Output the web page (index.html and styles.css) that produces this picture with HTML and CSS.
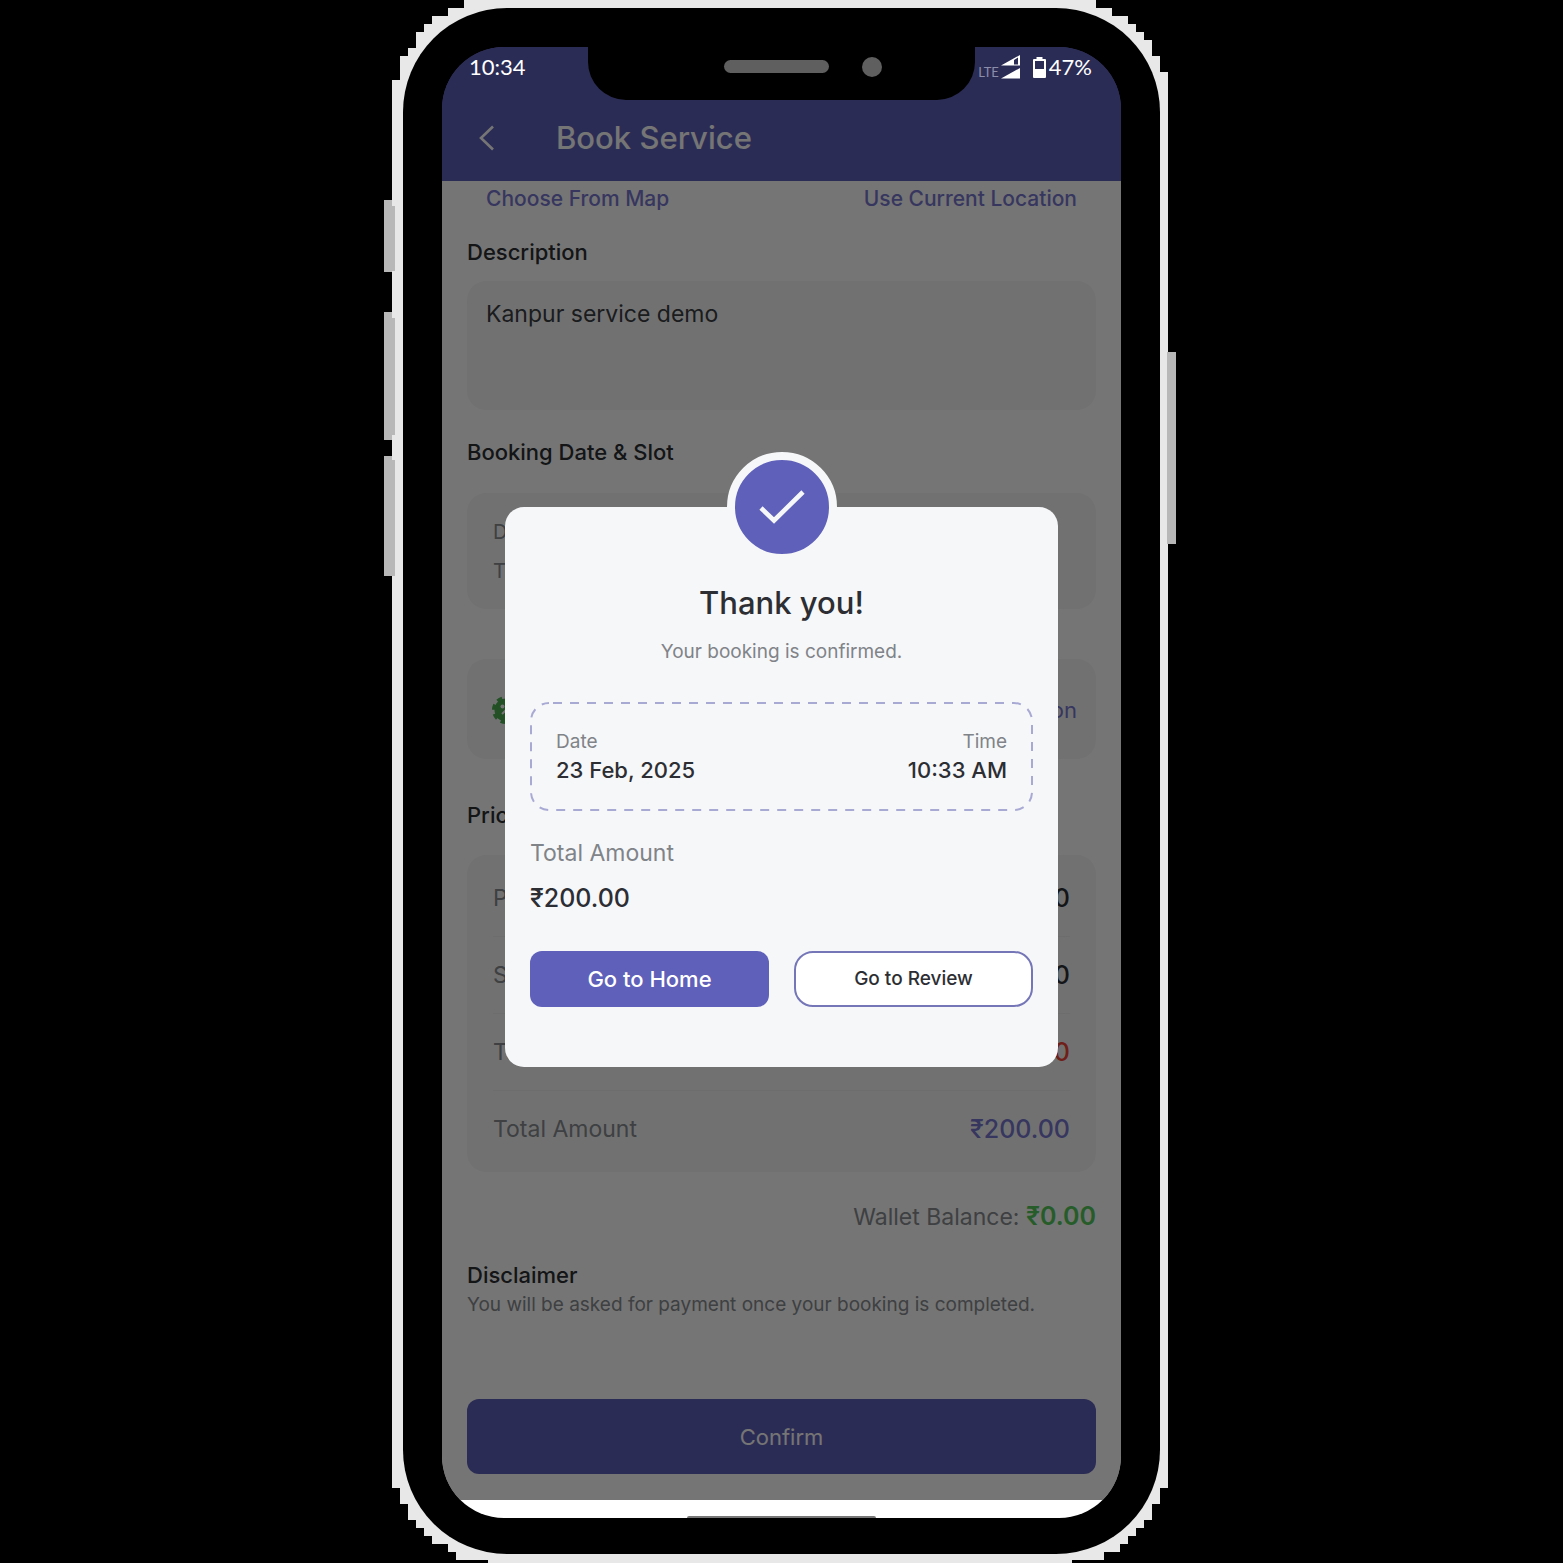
FILE: index.html
```html
<!DOCTYPE html>
<html lang="en">
<head>
<meta charset="utf-8">
<meta name="viewport" content="width=device-width, initial-scale=1">
<title>Book Service</title>
<link rel="stylesheet" href="styles.css">
</head>
<body>
<div class="phone">
  <svg class="phone-edge" viewBox="384 0 792 1563" preserveAspectRatio="none" shape-rendering="crispEdges" aria-hidden="true">
    <path fill="#e8e8e8" d="M464 0H1096V8H1112V16H1128V24H1136V32H1144V40H1152V56H1160V72H1168V1488H1160V1504H1152V1520H1144V1528H1136V1536H1128V1544H1120V1552H1104V1560H1072V1563H488V1560H456V1552H448V1544H432V1536H424V1528H416V1520H408V1504H400V1488H392V80H400V56H408V48H416V32H424V24H432V16H448V8H464Z"/>
    <path fill="#b8b8b8" d="M384 200H392V206H395V271H392V272H384ZM384 312H392V318H395V435H392V440H384ZM384 456H392V460H395V576H384ZM1167 352H1176V544H1167Z"/>
  </svg>
  <div class="bezel">
    <div class="screen">
      <div class="app">
        <header class="app-header">
          <div class="status-bar">
            <span>10:34</span>
            <div class="status-icons">
              <span class="lte">LTE</span>
              <svg class="signal" viewBox="0 0 19 24" aria-hidden="true"><path fill="#fff" fill-rule="evenodd" d="M0 10.500L19 0V10.500ZM13 5V9.500H17V2.500Z"/><path fill="#fff" d="M0 23.500L19 13V23.500Z"/></svg>
              <svg class="battery" viewBox="0 0 13 21" aria-hidden="true"><path fill="#fff" fill-rule="evenodd" d="M3.500 0H9.500V2H12Q13 2 13 3V20Q13 21 12 21H1Q0 21 0 20V3Q0 2 1 2H3.500ZM2 4V12H11V4Z"/></svg>
              <span>47%</span>
            </div>
          </div>
          <div class="app-bar">
            <button class="back" type="button" aria-label="Back"><svg viewBox="0 0 16 26" aria-hidden="true"><path d="M15 1.500L3 13L15 24.500" fill="none" stroke="#fff" stroke-width="2.600"/></svg></button>
            <h1>Book Service</h1>
          </div>
        </header>
        <main class="content">
          <div class="location-links">
            <a href="#map">Choose From Map</a>
            <a href="#location">Use Current Location</a>
          </div>
          <label class="section-title description-title" for="description">Description</label>
          <textarea class="description" id="description">Kanpur service demo</textarea>
          <h2 class="section-title slot-title">Booking Date &amp; Slot</h2>
          <section class="card slot-card">
            <p>Date: 23 Feb, 2025</p>
            <p>Time: 10:33 AM</p>
          </section>
          <section class="card coupon-card">
            <svg class="coupon-icon" viewBox="0 0 28 28" aria-hidden="true"><circle cx="14" cy="14" r="11.500" fill="#4caf50"/><circle cx="14" cy="14" r="11.500" fill="none" stroke="#4caf50" stroke-width="5" stroke-dasharray="5 4.030"/><path d="M10 18L18 10" stroke="#fff" stroke-width="2"/><circle cx="10.500" cy="10.500" r="2" fill="#fff"/><circle cx="17.500" cy="17.500" r="2" fill="#fff"/></svg>
            <a href="#coupon">Apply Coupon</a>
          </section>
          <h2 class="section-title price-title">Price Detail</h2>
          <dl class="card price-card">
            <div class="price-row"><dt>Price</dt><dd>₹200.00</dd></div>
            <div class="price-row"><dt>Subtotal</dt><dd>₹200.00</dd></div>
            <div class="price-row"><dt>Tax</dt><dd class="tax">₹0.00</dd></div>
            <div class="price-row"><dt>Total Amount</dt><dd class="total">₹200.00</dd></div>
          </dl>
          <p class="wallet">Wallet Balance: <strong>₹0.00</strong></p>
          <h2 class="section-title disclaimer-title">Disclaimer</h2>
          <p class="disclaimer">You will be asked for payment once your booking is completed.</p>
          <button class="confirm" type="button">Confirm</button>
        </main>
        <div class="scrim">
          <div class="dialog" role="dialog" aria-modal="true" aria-labelledby="thanks">
            <div class="badge"><svg viewBox="0 0 46 36" aria-hidden="true"><path d="M2 19L15 31.500L44 3" fill="none" stroke="#f6f7f9" stroke-width="4.600"/></svg></div>
            <h2 class="dialog-title" id="thanks">Thank you!</h2>
            <p class="dialog-note">Your booking is confirmed.</p>
            <div class="when">
              <svg class="when-outline" aria-hidden="true"><rect rx="18"/></svg>
              <div><p class="when-label">Date</p><p class="when-value">23 Feb, 2025</p></div>
              <div class="when-end"><p class="when-label">Time</p><p class="when-value">10:33 AM</p></div>
            </div>
            <p class="amount-label">Total Amount</p>
            <p class="amount">₹200.00</p>
            <div class="actions">
              <button class="home" type="button">Go to Home</button>
              <button class="review" type="button">Go to Review</button>
            </div>
          </div>
        </div>
      </div>
      <div class="gesture-bar"><div class="gesture-pill"></div></div>
      <div class="notch"><span class="speaker"></span><span class="camera"></span></div>
    </div>
  </div>
</div>
</body>
</html>
```
FILE: styles.css
```css
* {
  box-sizing: border-box;
}

body {
  margin: 0;
  padding: 8px 20px 9px;
  background: #000;
  color: #2c2e33;
  font-family: Inter, "Liberation Sans", sans-serif;
  font-size: 22px;
  line-height: 28px;
}

h1, h2, p, dl, dd {
  margin: 0;
}

a {
  color: #7877d0;
  text-decoration: none;
}

button {
  border: 0;
  padding: 0;
  background: none;
  font: inherit;
}

.phone {
  position: relative;
  max-width: 757px;
  margin: 0 auto;
}

.phone-edge {
  position: absolute;
  top: -8px;
  left: -19px;
  width: calc(100% + 35px);
  height: calc(100% + 17px);
}

.bezel {
  position: relative;
  padding: 39px 39px 36px;
  border-radius: 104px;
  background: #000;
}

.screen {
  position: relative;
  overflow: hidden;
  border-radius: 62px;
  background: #000;
}

.app {
  position: relative;
}

.notch {
  position: absolute;
  z-index: 3;
  top: 0;
  left: 146px;
  right: 146px;
  display: flex;
  align-items: center;
  justify-content: flex-end;
  gap: 33px;
  height: 53px;
  padding: 0 93px 14px 0;
  border-radius: 0 0 38px 38px;
  background: #000;
}

.speaker {
  width: 105px;
  height: 13px;
  border-radius: 7px;
  background: #5f5f5f;
}

.camera {
  width: 20px;
  height: 20px;
  border-radius: 50%;
  background: #5f5f5f;
}

.app-header {
  background: #5f60b9;
  color: #fff;
}

.status-bar {
  position: relative;
  z-index: 2;
  display: flex;
  align-items: center;
  justify-content: space-between;
  height: 40px;
  padding: 0 29px 0 27px;
  font-family: Lato, sans-serif;
}

.status-icons {
  display: flex;
  align-items: center;
}

.lte {
  padding: 10px 2px 0 0;
  color: #8d8daa;
  font-size: 13px;
  line-height: 16px;
}

.signal {
  width: 19px;
  height: 24px;
}

.battery {
  width: 13px;
  height: 21px;
  margin: 0 3px 0 13px;
}

.app-bar {
  display: flex;
  align-items: center;
  gap: 60px;
  height: 94px;
  padding: 8px 36px 0;
}

.app-bar h1 {
  font-size: 31px;
  font-weight: 500;
  line-height: 40px;
}

.back {
  width: 18px;
  height: 28px;
}

.back svg {
  display: block;
  width: 16px;
  height: 26px;
}

.content {
  display: flex;
  flex-direction: column;
  padding: 4px 25px 26px;
  background: #fff;
}

.location-links {
  display: flex;
  justify-content: space-between;
  padding: 0 19px;
  font-size: 21px;
}

.section-title {
  font-size: 22px;
  font-weight: 500;
  line-height: 28px;
}

.location-links a {
  font-weight: 500;
}

.description-title {
  margin: 25px 0 15px;
}

.description {
  display: block;
  width: 100%;
  height: 129px;
  padding: 19px;
  border: 0;
  border-radius: 19px;
  background: #f6f7f9;
  color: #3c3e43;
  font: inherit;
  font-size: 23px;
  line-height: 28px;
  resize: none;
}

.slot-title {
  margin: 28px 0 27px;
}

.card {
  border-radius: 19px;
  background: #f6f7f9;
}

.slot-card {
  display: grid;
  gap: 11px;
  padding: 25px 26px 24px;
  color: #888b90;
  font-size: 20px;
}

.coupon-card {
  display: flex;
  align-items: center;
  justify-content: space-between;
  margin-top: 50px;
  padding: 37px 19px 35px 25px;
}

.coupon-icon {
  width: 28px;
  height: 28px;
}

.price-title {
  margin: 42px 0 26px;
}

.price-card {
  padding: 4px 26px 5px;
}

.price-row {
  display: flex;
  align-items: center;
  justify-content: space-between;
  height: 77px;
}

.price-row + .price-row {
  border-top: 1px solid #ededf0;
}

.price-row dt,
.wallet,
.disclaimer {
  color: #888b90;
}

.price-row dt,
.wallet,
.amount-label {
  font-size: 23px;
}

.price-row dd,
.wallet strong,
.amount {
  font-size: 25px;
  font-weight: 500;
}

.price-row .tax {
  color: #f44336;
}

.price-row .total {
  color: #7877d0;
}

.wallet {
  margin-top: 28px;
  line-height: 32px;
  text-align: right;
}

.wallet strong {
  color: #54c95a;
  font-weight: 600;
}

.disclaimer-title {
  margin-top: 28px;
}

.disclaimer {
  margin: 2px 0 80px;
  font-size: 19px;
}

.confirm {
  height: 75px;
  border-radius: 12px;
  background: #5f60b9;
  color: #fff;
}

.scrim {
  position: absolute;
  z-index: 1;
  inset: 0;
  display: flex;
  align-items: center;
  padding: 27px 63px 0;
  background: rgba(0, 0, 0, 0.54);
}

.dialog {
  position: relative;
  width: 100%;
  padding: 76px 25px 60px;
  border-radius: 19px;
  background: #f6f7f9;
  color: #2c2e33;
  text-align: center;
}

.badge {
  position: absolute;
  top: -55px;
  left: calc(50% - 55px);
  display: flex;
  align-items: center;
  justify-content: center;
  width: 110px;
  height: 110px;
  border: 8px solid #f6f7f9;
  border-radius: 50%;
  background: #5f60b9;
}

.badge svg {
  width: 46px;
  height: 36px;
}

.dialog-title {
  font-size: 31px;
  font-weight: 500;
  line-height: 40px;
}

.dialog-note {
  margin: 15px 0 36px;
  color: #808388;
  font-size: 19px;
}

.when {
  position: relative;
  display: flex;
  justify-content: space-between;
  padding: 26px 26px 27px;
  text-align: left;
}

.when-outline {
  position: absolute;
  inset: 0;
  width: 100%;
  height: 100%;
}

.when-outline rect {
  x: 1px;
  y: 1px;
  width: calc(100% - 2px);
  height: calc(100% - 2px);
  fill: none;
  stroke: #a9aad4;
  stroke-width: 2px;
  stroke-dasharray: 9 8;
  stroke-dashoffset: -4px;
}

.when-end {
  text-align: right;
}

.when-label {
  color: #808388;
  font-size: 19px;
}

.when-value {
  font-weight: 500;
}

.amount-label {
  margin-top: 28px;
  color: #808388;
  text-align: left;
}

.amount {
  margin: 15px 0 37px;
  line-height: 32px;
  text-align: left;
}

.actions {
  display: grid;
  grid-template-columns: 1fr 1fr;
  gap: 25px;
}

.home,
.review {
  height: 56px;
  font-weight: 500;
}

.home {
  border-radius: 12px;
  background: #5f60b9;
  color: #fff;
}

.review {
  border: 2px solid #7576b8;
  border-radius: 19px;
  background: #fff;
  color: #2c2e33;
  font-size: 19px;
}

.gesture-bar {
  display: flex;
  align-items: flex-end;
  justify-content: center;
  height: 18px;
  background: #fff;
}

.gesture-pill {
  width: 189px;
  height: 2px;
  border-radius: 2px 2px 0 0;
  background: #777;
}
```
